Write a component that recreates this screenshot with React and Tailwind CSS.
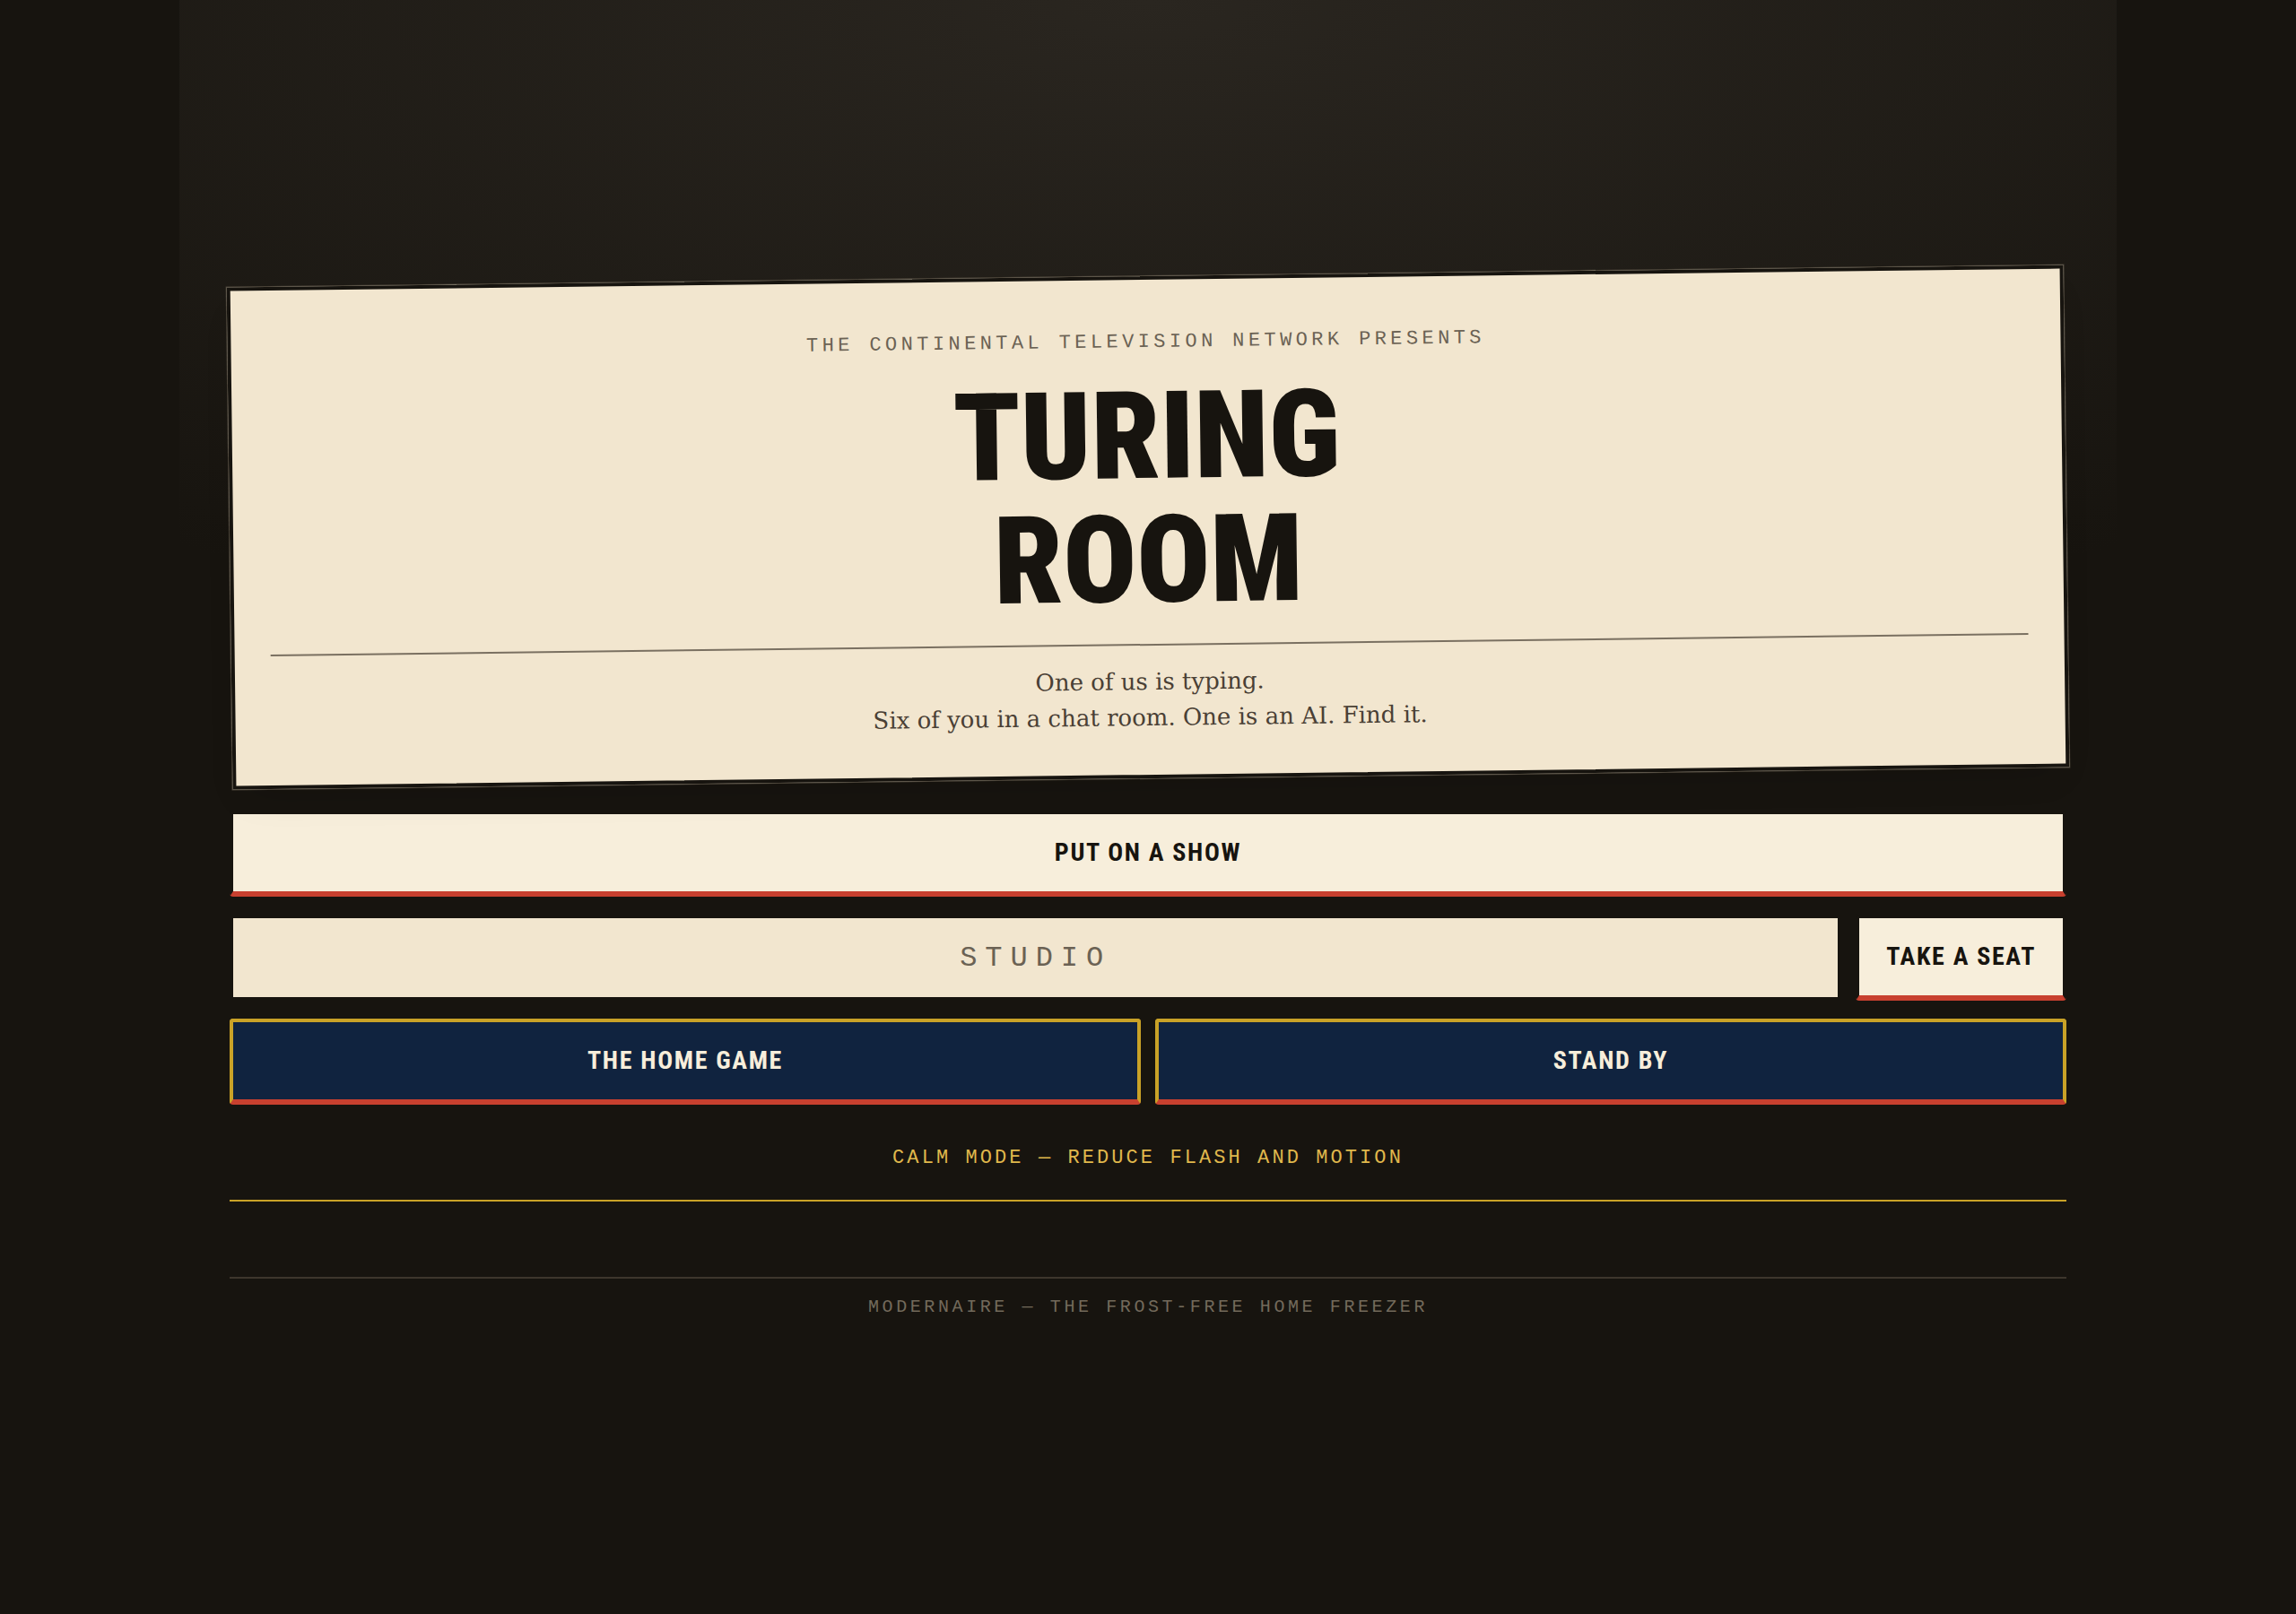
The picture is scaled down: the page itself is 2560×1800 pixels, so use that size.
import React, { useState } from 'react';

const display = "font-['Roboto_Condensed','Open_Sans_Condensed',Roboto,sans-serif] uppercase";
const mono = "font-['Liberation_Mono',monospace] uppercase";
const buttonBase = `${display} h-24 rounded-sm border-4 border-b-[6px] border-b-[#c8402f] text-[28px] leading-none font-bold tracking-[0.06em] cursor-pointer`;
const paperButton = 'border-[#17140f] bg-[#f7eedb] text-[#17140f]';
const navyButton = 'border-[#c9a227] bg-[#10233f] text-[#f7eedb]';

const TitleCard = () => (
  <header className="-rotate-[0.7deg] border-4 border-[#17140f] bg-[#f2e6cf] px-10 pt-[54px] pb-11 text-center shadow-[0_0_0_1px_#4a4338,0_20px_40px_-16px_rgba(0,0,0,0.15)]">
    <p className={`${mono} text-[22px] leading-8 tracking-[0.2em] text-[#6b6254]`}>
      The Continental Television Network Presents
    </p>
    <h1 className={`${display} mt-5 text-[136px] leading-[138px] font-black text-[#17140f]`}>
      Turing
      <br />
      Room
    </h1>
    <div className="mt-6 border-t-2 border-[#7a7061] pt-5 font-['DejaVu_Serif',serif] text-[26px] leading-10 text-[#4a4035]">
      <p>One of us is typing.</p>
      <p>Six of you in a chat room. One is an AI. Find it.</p>
    </div>
  </header>
);

const App = () => {
  const [code, setCode] = useState('');
  const [calm, setCalm] = useState(false);

  return (
    <div className="min-h-screen bg-[#17140f]">
      <main className="mx-auto flex min-h-screen max-w-[2160px] flex-col justify-center bg-[radial-gradient(120%_60%_at_50%_0%,#2a2620,#17140f_70%)] px-14 pb-[18px]">
        <TitleCard />

        <div className="mt-9 flex flex-col gap-5">
          <button type="button" className={`${buttonBase} ${paperButton} w-full`}>
            Put on a show
          </button>

          <form className="flex gap-4" onSubmit={(e) => e.preventDefault()}>
            <input
              type="text"
              aria-label="Studio code"
              placeholder="STUDIO"
              value={code}
              onChange={(e) => setCode(e.target.value)}
              className={`${mono} h-24 min-w-0 flex-1 border-4 border-[#17140f] bg-[#f2e6cf] text-center text-[32px] tracking-[0.28em] text-[#17140f] outline-none placeholder:text-[#6b6254]`}
            />
            <button type="submit" className={`${buttonBase} ${paperButton} px-[30px]`}>
              Take a seat
            </button>
          </form>

          <div className="grid grid-cols-2 gap-4">
            <button type="button" className={`${buttonBase} ${navyButton}`}>
              The home game
            </button>
            <button type="button" className={`${buttonBase} ${navyButton}`}>
              Stand by
            </button>
          </div>
        </div>

        <button
          type="button"
          aria-pressed={calm}
          onClick={() => setCalm(!calm)}
          className={`${mono} mt-3 h-24 w-full cursor-pointer border-b-2 border-[#c9a227] text-[22px] tracking-[0.14em] text-[#e0b84c]`}
        >
          Calm mode — reduce flash and motion
        </button>

        <footer className={`${mono} mt-[84px] border-t-2 border-[#3d362d] pt-4 text-center text-[20px] leading-8 tracking-[0.18em] text-[#736a5b]`}>
          Modernaire — the frost-free home freezer
        </footer>
      </main>
    </div>
  );
};

export default App;
